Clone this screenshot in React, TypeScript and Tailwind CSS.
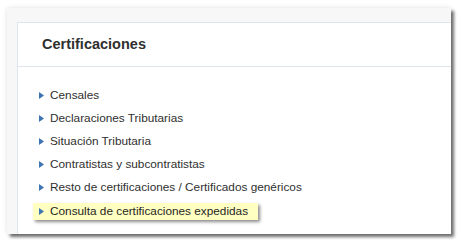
import React from "react";

const items = [
    "Censales",
    "Declaraciones Tributarias",
    "Situación Tributaria",
    "Contratistas y subcontratistas",
    "Resto de certificaciones / Certificados genéricos",
];

const Arrow = () => (
    <svg width="5" height="7" viewBox="0 0 5 7" className="shrink-0">
        <path d="M0 0 L5 3.5 L0 7 Z" fill="#3f74b3" />
    </svg>
);

export default function App() {
    return (
        <div className="w-[460px] h-[244px] bg-white pt-[8px] pl-[7px] font-['Liberation_Sans',Arial,sans-serif]">
            <div className="w-[444px] h-[226px] bg-[#f7f7f7] overflow-hidden pl-[10px] pt-[14px] shadow-[3px_3px_3px_rgba(0,0,0,0.55),0_0_5px_rgba(0,0,0,0.12)]">
                <div className="w-[460px] h-[240px] bg-white border-l border-t border-[#dde6ee]">
                    <div className="h-[44px] flex items-center pl-[24px] border-b border-[#dde6ee]">
                        <h2 className="text-[14.5px] font-bold text-[#2f2f2f]">Certificaciones</h2>
                    </div>
                    <ul className="pt-[17px] pl-[15px] flex flex-col">
                        {items.map((item) => (
                            <li key={item} className="h-[23px] flex items-center gap-[6px] pl-[6px] text-[11.8px] text-[#2f2f2f]">
                                <Arrow />
                                <span>{item}</span>
                            </li>
                        ))}
                        <li className="mt-[4px] w-[225px] h-[17px] flex items-center gap-[6px] pl-[6px] text-[11.8px] text-[#1f1f1f] bg-[#ffffc2] shadow-[2px_2px_3px_rgba(0,0,0,0.45)]">
                            <Arrow />
                            <span>Consulta de certificaciones expedidas</span>
                        </li>
                    </ul>
                </div>
            </div>
        </div>
    );
}
